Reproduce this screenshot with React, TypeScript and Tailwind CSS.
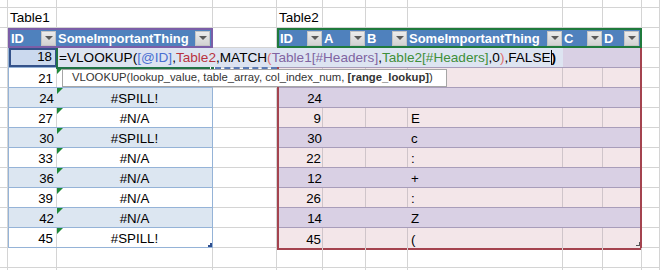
import React from "react";

const COLW = [
  "w-[8px]",
  "w-[49px]",
  "w-[156px]",
  "w-[64px]",
  "w-[46px]",
  "w-[43px]",
  "w-[42px]",
  "w-[155px]",
  "w-[40px]",
  "w-[39px]",
  "w-[18px]",
];

function GridRow({ h, label }: { h: string; label?: (i: number) => React.ReactNode }) {
  return (
    <div className={`flex shrink-0 ${h}`}>
      {COLW.map((w, i) => (
        <div key={i} className={`${w} shrink-0 border-r border-b border-[#d4d4d4] relative`}>
          {label ? label(i) : null}
        </div>
      ))}
    </div>
  );
}

function SpacerCol({ w }: { w: string }) {
  return (
    <div className={`${w} shrink-0 flex flex-col`}>
      {Array.from({ length: 11 }).map((_, i) => (
        <div key={i} className="h-[20px] shrink-0 border-r border-b border-[#d4d4d4]" />
      ))}
    </div>
  );
}

function DropBtn() {
  return (
    <div className="w-[15px] h-[15px] shrink-0 bg-gradient-to-b from-[#ececec] to-[#d2d2d2] border border-[#c4c4c4] flex items-center justify-center">
      <div className="w-0 h-0 border-l-[4px] border-r-[4px] border-t-[4px] border-l-transparent border-r-transparent border-t-[#5a5a5a]" />
    </div>
  );
}

function HeaderCell({ w, label }: { w: string; label: string }) {
  return (
    <div className={`${w} shrink-0 h-full flex items-center justify-between pl-[1px] pr-[1px]`}>
      <span className="text-white font-bold text-[13px] leading-none whitespace-nowrap">{label}</span>
      <DropBtn />
    </div>
  );
}

function ErrTri() {
  return (
    <div className="absolute left-0 top-0 w-0 h-0 border-t-[6px] border-r-[6px] border-t-[#1f8a3a] border-r-transparent" />
  );
}

const T1 = [
  { id: "18", v: "" },
  { id: "21", v: "" },
  { id: "24", v: "#SPILL!" },
  { id: "27", v: "#N/A" },
  { id: "30", v: "#SPILL!" },
  { id: "33", v: "#N/A" },
  { id: "36", v: "#N/A" },
  { id: "39", v: "#N/A" },
  { id: "42", v: "#N/A" },
  { id: "45", v: "#SPILL!" },
];

const T2 = [
  { id: "", v: "" },
  { id: "", v: "" },
  { id: "24", v: "" },
  { id: "9", v: "E" },
  { id: "30", v: "c" },
  { id: "22", v: ":" },
  { id: "12", v: "+" },
  { id: "26", v: ":" },
  { id: "14", v: "Z" },
  { id: "45", v: "(" },
];

function Table1() {
  return (
    <div className="w-[205px] shrink-0 flex flex-col relative">
      <div className="h-[20px] shrink-0 flex border-2 border-[#7b5ea7] bg-[#4f81bd]">
        <HeaderCell w="w-[47px]" label="ID" />
        <HeaderCell w="w-[154px]" label="SomeImportantThing" />
      </div>
      <div className="flex flex-col border-l border-r border-[#95b3d7]">
        {T1.map((r, i) => {
          const band = i % 2 === 0;
          return (
            <div
              key={i}
              className={`h-[20px] shrink-0 flex border-b border-[#95b3d7] ${band ? "bg-[#dce6f1]" : "bg-white"}`}
            >
              <div
                className={`w-[48px] shrink-0 flex items-end justify-end pr-[3px] pb-[2px] text-[13.3px] leading-none ${
                  i === 0 ? "border-2 border-[#34528a] bg-[#cbd9ee] pr-[1px] pb-[0px]" : band ? "" : "border-r border-[#d4d4d4]"
                }`}
              >
                {r.id}
              </div>
              <div className="flex-1 relative flex items-end justify-center pb-[2px] text-[13.3px] leading-none">
                {i > 0 ? <ErrTri /> : null}
                {r.v}
              </div>
            </div>
          );
        })}
      </div>
      <div className="absolute right-[1px] bottom-[1px] w-[4px] h-[4px] border-r-2 border-b-2 border-[#2f4f8f]" />
    </div>
  );
}

function Table2() {
  const widths = ["w-[44px]", "w-[43px]", "w-[42px]", "w-[155px]", "w-[40px]", "flex-1"];
  return (
    <div className="w-[365px] shrink-0 flex flex-col relative">
      <div className="h-[20px] shrink-0 flex border-2 border-[#1f7a3c] bg-[#4f81bd]">
        <HeaderCell w="w-[44px]" label="ID" />
        <HeaderCell w="w-[43px]" label="A" />
        <HeaderCell w="w-[42px]" label="B" />
        <HeaderCell w="w-[155px]" label="SomeImportantThing" />
        <HeaderCell w="w-[40px]" label="C" />
        <HeaderCell w="w-[37px]" label="D" />
      </div>
      <div className="flex flex-col border-l-2 border-r-2 border-b-2 border-[#a4434f]">
        {T2.map((r, i) => {
          const band = i % 2 === 0;
          return (
            <div
              key={i}
              className={`h-[20px] shrink-0 flex ${i < 9 ? "border-b border-[#a89dba]" : ""} ${
                band ? "bg-[#d9d0e4]" : "bg-[#f3e6e9]"
              }`}
            >
              {widths.map((w, j) => (
                <div
                  key={j}
                  className={`${w} shrink-0 h-full flex items-end pb-[2px] text-[13.3px] leading-none ${
                    j === 0 ? "justify-end pr-[1px]" : "justify-start pl-[3px]"
                  } ${!band && j < 5 ? "border-r border-[#cfc5ca]" : ""}`}
                >
                  {j === 0 ? r.id : j === 3 ? r.v : ""}
                </div>
              ))}
            </div>
          );
        })}
      </div>
      <div className="absolute right-[2px] bottom-[2px] w-[4px] h-[4px] border-r border-b border-[#555]" />
    </div>
  );
}

export default function App() {
  return (
    <div className="w-[660px] h-[270px] relative overflow-hidden bg-white text-black font-['Liberation_Sans',Arial,sans-serif]">
      <div className="flex flex-col">
        <GridRow h="h-[8px]" />
        <GridRow
          h="h-[20px]"
          label={(i) =>
            i === 1 ? (
              <span className="absolute left-[2px] bottom-[3px] text-[13.5px] leading-none whitespace-nowrap">Table1</span>
            ) : i === 4 ? (
              <span className="absolute left-[2px] bottom-[3px] text-[13.5px] leading-none whitespace-nowrap">Table2</span>
            ) : null
          }
        />
        <div className="flex h-[220px] shrink-0">
          <SpacerCol w="w-[8px]" />
          <Table1 />
          <SpacerCol w="w-[64px]" />
          <Table2 />
          <SpacerCol w="w-[18px]" />
        </div>
        <GridRow h="h-[20px]" />
        <GridRow h="h-[20px]" />
      </div>

      {/* active cell border (left + bottom) */}
      <div className="absolute left-[56px] top-[48px] w-[158px] h-[21px] border-l-2 border-b-2 border-[#217346]" />
      {/* fill handle */}
      <div className="absolute left-[210px] top-[66px] w-[5px] h-[5px] bg-[#217346] border border-white" />
      {/* dashed line */}
      <div className="absolute left-[215px] top-[67px] w-[62px] h-0 border-t-2 border-dashed border-[#5b7bb5]" />

      {/* in-cell editor */}
      <div className="absolute left-[58px] top-[48px] w-[505px] h-[19px] bg-[#dde4f1] flex items-end pb-[2px] pl-[1px]">
        <span className="text-[13.6px] leading-none whitespace-nowrap">
          <span>=VLOOKUP(</span>
          <span className="text-[#4a6fd1]">[@ID]</span>
          <span>,</span>
          <span className="text-[#b8323f]">Table2</span>
          <span>,MATCH</span>
          <span className="text-[#e07070]">(</span>
          <span className="text-[#8064a2]">Table1[#Headers]</span>
          <span>,</span>
          <span className="text-[#3f8f3a]">Table2[#Headers]</span>
          <span>,0</span>
          <span className="text-[#e07070]">)</span>
          <span>,FALSE</span>
          <span className="inline-block w-[1px] h-[15px] bg-black align-[-3px]" />
          <span className="font-bold">)</span>
        </span>
      </div>

      {/* tooltip */}
      <div className="absolute left-[62px] top-[69px] w-[385px] h-[18px] bg-white border border-[#a6a6a6] flex items-center pl-[9px]">
        <span className="text-[11.3px] leading-none whitespace-nowrap text-[#333333]">
          VLOOKUP(lookup_value, table_array, col_index_num, <span className="font-bold">[range_lookup]</span>)
        </span>
      </div>
    </div>
  );
}
